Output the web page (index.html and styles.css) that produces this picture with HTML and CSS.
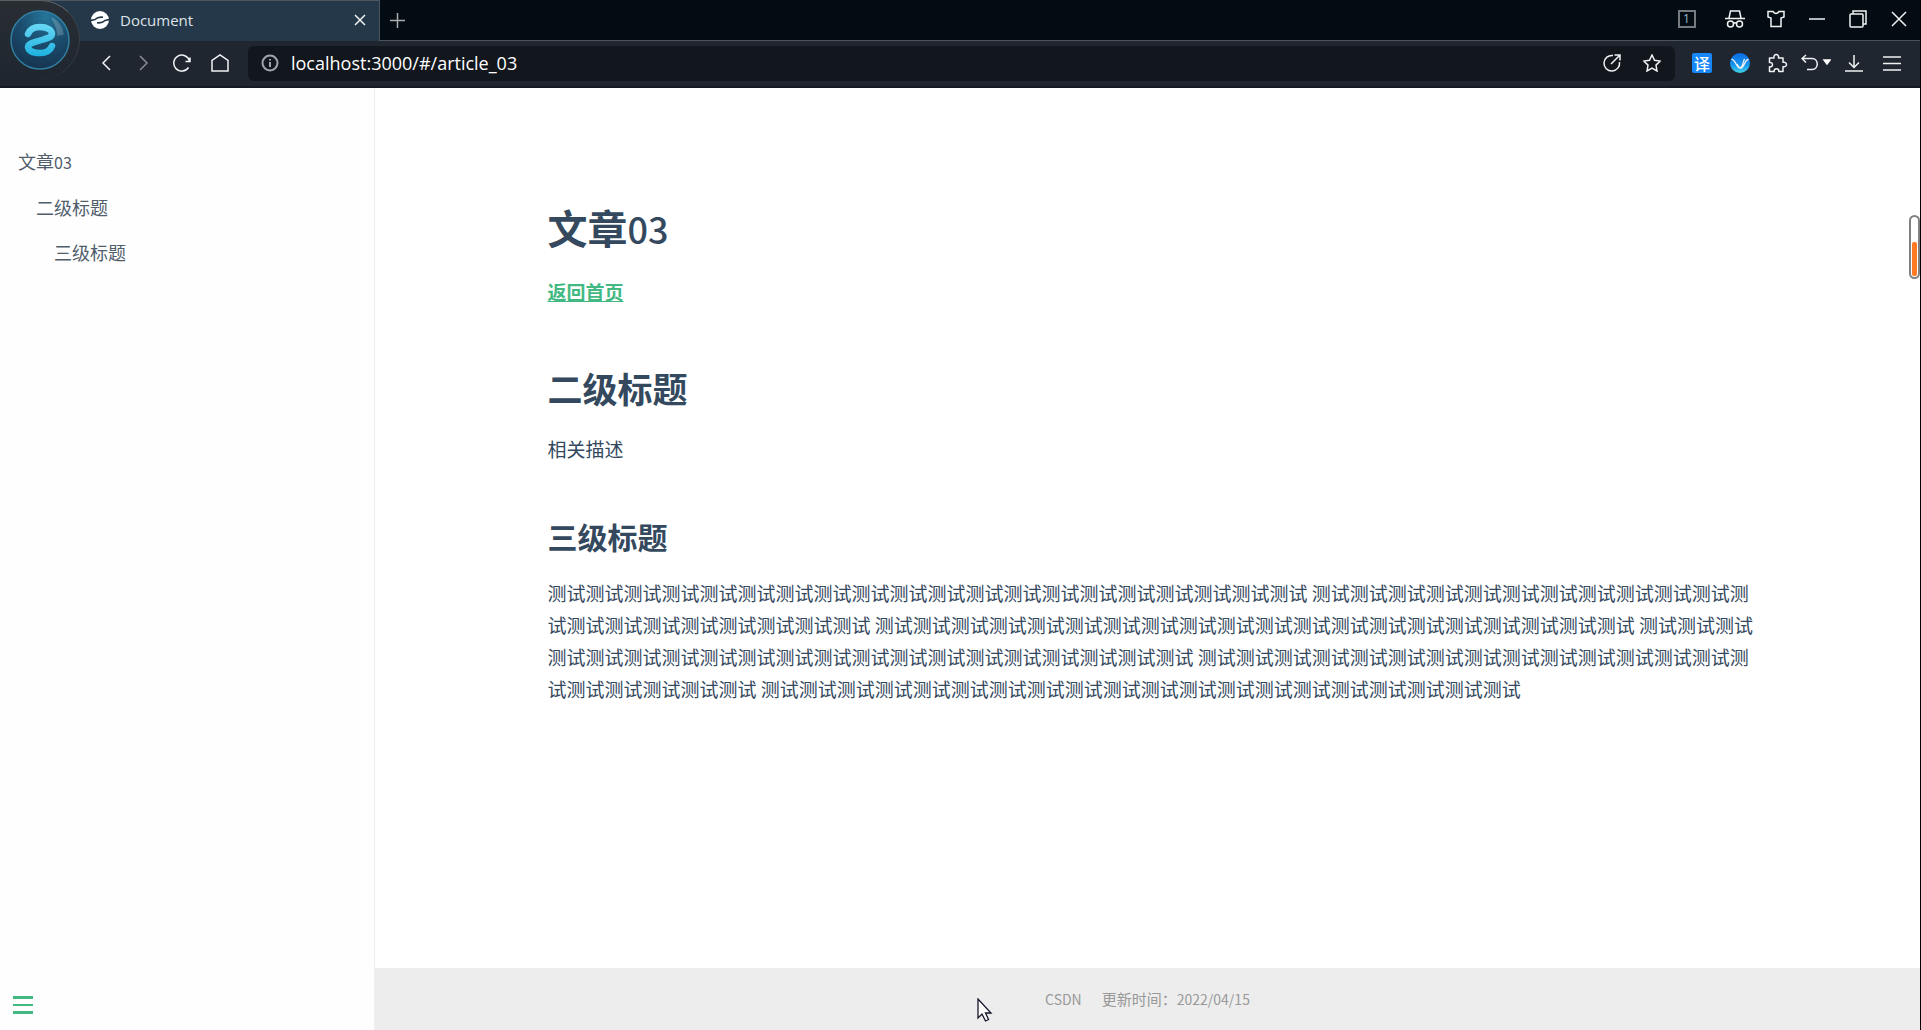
FILE: index.html
```html
<!DOCTYPE html>
<html lang="zh-CN">
<head>
<meta charset="UTF-8">
<title>Document</title>
<link rel="stylesheet" href="styles.css">
</head>
<body>
<div class="window">
  <header class="chrome">
    <div class="tabstrip">
      <div class="tab">
        <svg class="tab-icon" width="18" height="18" viewBox="0 0 18 18"><circle cx="9" cy="9" r="9" fill="#fff"/><path d="M-.5 9.500L4 8.500C6 6.500 8 5.700 12 6.300M18.500 8.500L14 9.500C12 11.500 10 12.300 6 11.700" fill="none" stroke="#24384a" stroke-width="1.600"/></svg>
        <span class="tab-title">Document</span>
        <button class="tab-close" aria-label="关闭标签页"><svg width="12" height="12" viewBox="0 0 12 12"><path d="M1 1l10 10M11 1L1 11"/></svg></button>
      </div>
      <button class="new-tab" aria-label="新建标签页"><svg width="15" height="15" viewBox="0 0 15 15"><path d="M7.500 0v15M0 7.500h15"/></svg></button>
      <div class="window-controls">
        <button class="control count" aria-label="窗口"><span class="count-box">1</span></button>
        <button class="control" aria-label="无痕"><svg width="20" height="18" viewBox="0 0 20 18"><path d="M4 8l1.500-7h9L16 8M0 8.500h20M8.500 13.500q1.500-1.500 3 0"/><circle cx="5.500" cy="14" r="3"/><circle cx="14.500" cy="14" r="3"/></svg></button>
        <button class="control" aria-label="皮肤"><svg width="18" height="18" viewBox="0 0 18 18"><path d="M1 1.500h5q3 4 6 0h5v5.500l-3 1v8.500H4V8L1 7z"/></svg></button>
        <button class="control" aria-label="最小化"><svg width="16" height="16" viewBox="0 0 16 16"><path d="M0 8h16"/></svg></button>
        <button class="control" aria-label="还原"><svg width="18" height="18" viewBox="0 0 18 18"><rect x="1" y="4" width="13" height="13" rx="1"/><path d="M4 4V1h13v13h-3"/></svg></button>
        <button class="control" aria-label="关闭"><svg width="16" height="16" viewBox="0 0 16 16"><path d="M1 1l14 14M15 1L1 15"/></svg></button>
      </div>
    </div>
    <div class="toolbar">
      <button class="tool" aria-label="后退"><svg width="10" height="16" viewBox="0 0 10 16"><path d="M9 1L2 8l7 7"/></svg></button>
      <button class="tool dim" aria-label="前进"><svg width="10" height="16" viewBox="0 0 10 16"><path d="M1 1l7 7-7 7"/></svg></button>
      <button class="tool" aria-label="刷新"><svg width="18" height="18" viewBox="0 0 18 18"><path d="M15.500 13.500A8 8 0 1 1 16.500 7M12.500 7.500h4.500V3.500"/></svg></button>
      <button class="tool" aria-label="主页"><svg width="18" height="18" viewBox="0 0 18 18"><path d="M1 17V6.500L9 1l8 5.500V17z"/></svg></button>
      <div class="address">
        <svg class="info" width="18" height="18" viewBox="0 0 18 18"><circle cx="9" cy="9" r="7.500"/><path d="M9 8v5M9 5v1.500"/></svg>
        <input class="url" type="text" aria-label="地址" value="localhost:3000/#/article_03">
        <button class="inline-tool" aria-label="分享"><svg width="18" height="18" viewBox="0 0 18 18"><path d="M10 1.500A7.800 7.800 0 1 0 16.500 8M8 10l8.500-8.500M11.500 1H17v5.500"/></svg></button>
        <button class="inline-tool" aria-label="收藏"><svg width="18" height="18" viewBox="0 0 18 18"><path d="M9 1l2.500 5.300 5.700.8-4.200 4 1 5.900-5-2.800L4 17l1-5.900-4.200-4 5.700-.8z"/></svg></button>
      </div>
      <button class="tool" aria-label="翻译"><span class="translate">译</span></button>
      <button class="tool" aria-label="扩展"><svg width="20" height="20" viewBox="0 0 20 20"><defs><linearGradient id="sea" x2="0" y2="1"><stop offset="0" stop-color="#0b6be6"/><stop offset=".6" stop-color="#1695ee"/><stop offset="1" stop-color="#43d5e3"/></linearGradient></defs><circle cx="10" cy="10" r="10" fill="url(#sea)" stroke="none"/><path d="M1.500 6.500C5 5.500 6.500 15 10 15C12.500 15 13 9 14.500 6M18.500 6.500C15 6 14 15 11 15C8.500 15 8 12.500 7 11" stroke-width="1.300"/></svg></button>
      <button class="tool" aria-label="插件"><svg width="20" height="20" viewBox="0 0 20 20"><path d="M1.500 5H6C5 .300 11.500 .300 10.500 5H15V9.300C19.700 8.500 19.700 14.500 15 13.700V18.500H10.800C11.500 14.700 5.500 14.700 6.200 18.500H1.500V13.800C5.500 14.500 5.500 8.800 1.500 9.500Z" stroke-linejoin="round"/></svg></button>
      <button class="tool" aria-label="撤销"><svg width="30" height="18" viewBox="0 0 30 18"><path d="M5 1L1 4.500l4 4M1 4.500h10c7 0 7 11 0 11H6"/><path d="M23 6h6l-3 4z" fill="#fff" stroke="#fff"/></svg></button>
      <button class="tool" aria-label="下载"><svg width="18" height="18" viewBox="0 0 18 18"><path d="M9 1v12M4 8.500L9 13.500l5-5M0 17h18"/></svg></button>
      <button class="tool" aria-label="菜单"><svg width="18" height="18" viewBox="0 0 18 18"><path d="M0 3h18M0 9.500h18M0 16h18"/></svg></button>
    </div>
    <button class="brand" aria-label="浏览器"><svg width="60" height="60" viewBox="0 0 60 60"><defs><radialGradient id="orb" cx=".6" cy=".1" r=".9"><stop offset="0" stop-color="#25759a"/><stop offset=".5" stop-color="#1b4d6e"/><stop offset="1" stop-color="#163550"/></radialGradient><linearGradient id="glyph" x1="0" y1="14" x2="0" y2="46" gradientUnits="userSpaceOnUse"><stop offset="0" stop-color="#6ad8f6"/><stop offset="1" stop-color="#1eb2e0"/></linearGradient></defs><circle cx="30" cy="30" r="29" fill="url(#orb)" stroke="#317fa2" stroke-width="1.500"/><path d="M42 8q10 6 11 16l-5 1Q47 16 42 8z" fill="#fff" opacity=".2"/><path d="M18 24C20 19 25 17 30 17C37 17 42 20 42 24C41.500 28 36 28.500 30 30.500C24 32.500 18.500 33 18 37C19 42 25 43 30 43C36 43 40 41 42 36" stroke="url(#glyph)" stroke-width="6.500" stroke-linecap="round"/></svg></button>
  </header>
  <div class="page">
    <aside class="sidebar">
      <nav>
        <ul class="toc">
          <li><a href="#a">文章<span class="toc-number">03</span></a>
            <ul><li><a href="#b">二级标题</a>
              <ul><li><a href="#c">三级标题</a></li></ul>
            </li></ul>
          </li>
        </ul>
      </nav>
      <button class="sidebar-toggle" aria-label="菜单"><span class="bar"></span><span class="bar thin"></span><span class="bar"></span></button>
    </aside>
    <main class="content">
      <article class="article">
        <h1 id="a">文章<span class="number">03</span></h1>
        <p><a class="home-link" href="#/">返回首页</a></p>
        <h2 id="b">二级标题</h2>
        <p>相关描述</p>
        <h3 id="c">三级标题</h3>
        <p>测试测试测试测试测试测试测试测试测试测试测试测试测试测试测试测试测试测试测试测试 测试测试测试测试测试测试测试测试测试测试测试测试测试测试测试测试测试测试测试测试 测试测试测试测试测试测试测试测试测试测试测试测试测试测试测试测试测试测试测试测试 测试测试测试测试测试测试测试测试测试测试测试测试测试测试测试测试测试测试测试测试 测试测试测试测试测试测试测试测试测试测试测试测试测试测试测试测试测试测试测试测试 测试测试测试测试测试测试测试测试测试测试测试测试测试测试测试测试测试测试测试测试</p>
      </article>
      <footer class="footer"><span class="latin">CSDN</span><span>更新时间：<span class="latin">2022/04/15</span></span></footer>
    </main>
  </div>
  <div class="scroll-mark"><div class="scroll-level"></div></div>
  <svg class="cursor" width="16" height="24" viewBox="0 0 16 24"><path d="M1 1v19l4-4 3.500 7 3-1.500L8.500 15H14z" fill="#fff" stroke="#15152a" stroke-width="1.300"/></svg>
</div>
</body>
</html>
```
FILE: styles.css
```css
* { box-sizing: border-box; }
body {
  margin: 0;
  color: #34495e;
  font-family: "Noto Sans CJK SC", sans-serif;
  font-size: 19px;
  font-weight: 400;
  line-height: 32px;
}
button {
  display: flex;
  align-items: center;
  justify-content: center;
  padding: 0;
  border: 0;
  background: none;
}
.window {
  position: relative;
  display: flex;
  flex-direction: column;
  min-height: 100vh;
  border-right: 1px solid #000;
  background: #fff;
}

/* Browser chrome */
.chrome { position: relative; font-family: "Open Sans", "Noto Sans CJK SC", sans-serif; }
.chrome svg { display: block; fill: none; stroke: #f0f2f4; stroke-width: 1.5; }
.tabstrip { display: flex; height: 41px; background: #030c12; border-bottom: 1px solid #4b5359; }
.tab {
  display: flex;
  align-items: center;
  width: 380px;
  height: 41px;
  padding: 0 13px 2px 91px;
  gap: 11px;
  border-top: 1px solid #4b5660;
  border-right: 1px solid #4b5660;
  background: #24384a;
}
.chrome .tab-icon { stroke: none; }
.tab-title { flex: 1; color: #dfe3e7; font-size: 15px; line-height: 20px; }
.tab-close { width: 12px; height: 20px; }
.new-tab { width: 34px; }
.new-tab svg { opacity: .7; }
.window-controls { display: flex; margin-left: auto; padding: 0 1px 2px 0; }
.control { width: 41px; }
.count { margin-right: 7px; }
.count-box {
  width: 18px;
  height: 18px;
  border: 2px solid #767b7f;
  color: #9db8d4;
  font: 12px/14px "Open Sans", sans-serif;
}
.toolbar {
  display: flex;
  align-items: center;
  height: 47px;
  padding: 0 9px 1px 87px;
  border-bottom: 2px solid #151a22;
  background: #1f262f;
}
.tool { flex: none; width: 38px; height: 36px; }
.dim { opacity: .5; }
.address {
  display: flex;
  flex: 1;
  align-items: center;
  height: 35px;
  margin: 0 8px 0 9px;
  padding: 0 3px 0 13px;
  border-radius: 6px;
  background: #12161d;
}
.chrome .info { stroke: #a0a5ac; stroke-width: 2; }
.url {
  flex: 1;
  min-width: 0;
  margin-left: 12px;
  padding: 0;
  border: 0;
  background: none;
  color: #fff;
  font: 18px/24px "Open Sans", sans-serif;
}
.inline-tool { width: 40px; height: 35px; }
.translate {
  width: 20px;
  height: 20px;
  border-radius: 2px;
  background: #1687f8;
  color: #fff;
  font: 500 16px/20px "Noto Sans CJK SC", sans-serif;
}
.brand {
  position: absolute;
  top: 0;
  left: 0;
  width: 80px;
  height: 79px;
  border-top: 1px solid #5b5f62;
  border-right: 1px solid #3b4146;
  border-radius: 0 40px 40px 0;
  background: linear-gradient(#282e33, #1f262f);
}

/* Document */
.page { display: flex; flex: 1; }
.sidebar {
  display: flex;
  flex: none;
  flex-direction: column;
  justify-content: space-between;
  width: 375px;
  padding: 51px 0 16px;
  border-right: 1px solid #ededed;
  background: #fefefe;
}
.toc, .toc ul { margin: 0; padding: 0 0 0 18px; list-style: none; }
.toc a { display: block; color: #505d6b; font-size: 18px; line-height: 45px; text-decoration: none; }
.toc-number { font-size: 16px; }
.sidebar-toggle { flex-direction: column; gap: 5px; width: 20px; margin-left: 13px; }
.bar { width: 20px; height: 3px; background: #42b983; }
.thin { height: 2px; }
.content { display: flex; flex: 1; flex-direction: column; min-width: 0; }
.article { flex: 1; width: 80%; margin: 0 auto; padding: 114px 8px 40px 18px; }
h1, h2, h3, p { margin: 0; }
h1 { margin-bottom: 23px; font-size: 40px; line-height: 50px; }
.number { font-size: 36px; font-weight: 500; }
h2 { margin: 58px 0 23px; font-size: 35px; line-height: 44px; }
h3 { margin: 51px 0 21px; font-size: 30px; line-height: 40px; }
.home-link { color: #42b983; font-weight: 700; }
.footer {
  display: flex;
  align-items: center;
  justify-content: center;
  gap: 20px;
  height: 62px;
  background: #ededed;
  color: #999;
  font-size: 15px;
  line-height: 24px;
}
.latin { font-size: 14px; }

/* Overlays */
.scroll-mark {
  position: absolute;
  top: 215px;
  right: 0;
  display: flex;
  align-items: flex-end;
  width: 11px;
  height: 64px;
  padding: 1px;
  border: 2px solid #808080;
  border-radius: 6px;
  background: #fff;
}
.scroll-level { width: 5px; height: 34px; border-radius: 2px; background: #ff7a22; }
.cursor { position: absolute; top: 998px; left: 977px; }
```
